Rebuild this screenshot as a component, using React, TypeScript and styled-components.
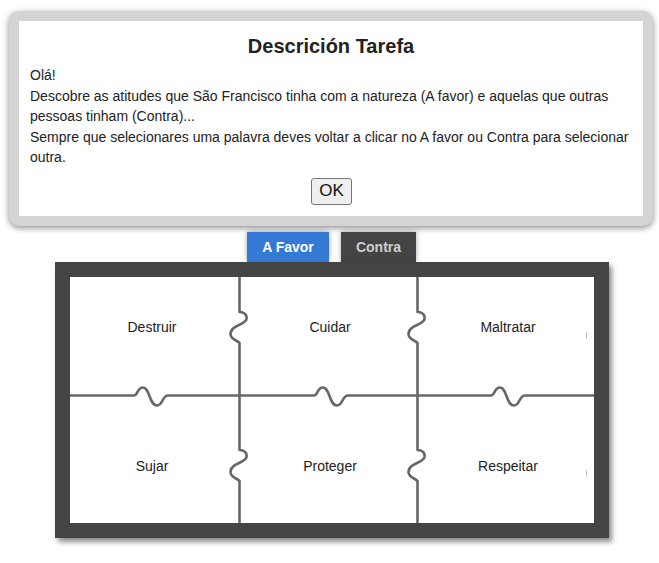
import React from "react";
import styled, { createGlobalStyle } from "styled-components";

const Global = createGlobalStyle`
  html, body { margin: 0; padding: 0; background: #fff; }
  body { font-family: "Liberation Sans", Arial, Helvetica, sans-serif; color: #222; }
`;

const Page = styled.div`
  width: 659px;
  height: 563px;
  padding-top: 11px;
  box-sizing: border-box;
  display: flex;
  flex-direction: column;
  align-items: flex-start;
`;

const Modal = styled.div`
  margin-left: 9px;
  width: 644px;
  box-sizing: border-box;
  border: 10px solid #d4d4d4;
  border-radius: 10px;
  background: #fff;
  box-shadow: 0 2px 6px rgba(0, 0, 0, 0.45);
  padding: 13px 11px 11px 11px;
  display: flex;
  flex-direction: column;
`;

const Title = styled.h2`
  margin: 0 0 7px 0;
  font-size: 20px;
  line-height: 24px;
  font-weight: bold;
  text-align: center;
  color: #222;
`;

const Body = styled.p`
  margin: 0;
  font-size: 14px;
  line-height: 20.5px;
  color: #222;
`;

const OkRow = styled.div`
  display: flex;
  justify-content: center;
  margin-top: 10px;
`;

const OkButton = styled.button`
  width: 41px;
  height: 27px;
  padding: 0;
  font-family: "Liberation Sans", Arial, sans-serif;
  font-size: 17px;
  color: #111;
  background: #efefef;
  border: 1px solid #767676;
  border-radius: 3px;
  margin-left: 1px;
`;

const Stage = styled.div`
  margin-top: 6px;
  padding-left: 55px;
  display: flex;
  flex-direction: column;
  align-items: flex-start;
`;

const TabBar = styled.div`
  display: flex;
  gap: 12px;
  margin-left: 192px;
`;

const Tab = styled.div<{ $active?: boolean }>`
  height: 30px;
  width: ${(p) => (p.$active ? "82px" : "75px")};
  display: flex;
  align-items: center;
  justify-content: center;
  font-size: 14px;
  font-weight: bold;
  background: ${(p) => (p.$active ? "#3479d3" : "#444")};
  color: ${(p) => (p.$active ? "#fff" : "#cfcfcf")};
  box-shadow: 0 0 5px rgba(0, 0, 0, 0.35);
`;

const Board = styled.div`
  width: 554px;
  box-sizing: border-box;
  border: 15px solid #444;
  background: #fff;
  box-shadow: 3px 4px 5px rgba(0, 0, 0, 0.45);
  position: relative;
  z-index: 1;
`;

const Grid = styled.div`
  display: grid;
  grid-template-columns: 170px 178px 176px;
  grid-template-rows: 119px 127px;
`;

const Piece = styled.div<{ $top: number; $dx: number }>`
  display: flex;
  justify-content: center;
  padding-top: ${(p) => p.$top}px;
  padding-left: ${(p) => (p.$dx > 0 ? p.$dx * 2 : 0)}px;
  padding-right: ${(p) => (p.$dx < 0 ? -p.$dx * 2 : 0)}px;
  box-sizing: border-box;
  font-size: 14px;
  line-height: 16px;
  color: #222;
`;

const Lines = styled.svg`
  position: absolute;
  left: 0;
  top: 0;
  pointer-events: none;
`;

const vTab = (x: number, y0: number) =>
  `L ${x} ${y0} C ${x + 2} ${y0} ${x + 8} ${y0 + 1} ${x + 7} ${y0 + 7} C ${x + 6} ${y0 + 13} ${x - 9} ${y0 + 13} ${x - 9} ${y0 + 22} C ${x - 9} ${y0 + 28} ${x - 2} ${y0 + 28} ${x} ${y0 + 31}`;

const hTab = (x0: number, y: number) =>
  `L ${x0} ${y} C ${x0 + 4} ${y} ${x0 + 3} ${y - 8} ${x0 + 9} ${y - 8} C ${x0 + 16} ${y - 8} ${x0 + 15} ${y + 10} ${x0 + 23} ${y + 10} C ${x0 + 29} ${y + 10} ${x0 + 28} ${y} ${x0 + 34} ${y}`;

const words = [
  { t: "Destruir", top: 42, dx: -3 },
  { t: "Cuidar", top: 42, dx: 1 },
  { t: "Maltratar", top: 42, dx: 2 },
  { t: "Sujar", top: 62, dx: -3 },
  { t: "Proteger", top: 62, dx: 1 },
  { t: "Respeitar", top: 62, dx: 2 },
];

export default function App() {
  const hy = 118.5;
  const hPath = `M 0 ${hy} ${hTab(64, hy)} ${hTab(244, hy)} ${hTab(421, hy)} L 524 ${hy}`;
  const v1 = `M 169.5 0 ${vTab(169.5, 35)} ${vTab(169.5, 173)} L 169.5 246`;
  const v2 = `M 347.5 0 ${vTab(347.5, 35)} ${vTab(347.5, 173)} L 347.5 246`;
  return (
    <>
      <Global />
      <Page>
        <Modal>
          <Title>Descrición Tarefa</Title>
          <Body>
            Olá!
            <br />
            Descobre as atitudes que São Francisco tinha com a natureza (A favor) e aquelas que outras
            pessoas tinham (Contra)...
            <br />
            Sempre que selecionares uma palavra deves voltar a clicar no A favor ou Contra para selecionar
            outra.
          </Body>
          <OkRow>
            <OkButton>OK</OkButton>
          </OkRow>
        </Modal>
        <Stage>
          <TabBar>
            <Tab $active>A Favor</Tab>
            <Tab>Contra</Tab>
          </TabBar>
          <Board>
            <Grid>
              {words.map((w) => (
                <Piece key={w.t} $top={w.top} $dx={w.dx}>
                  {w.t}
                </Piece>
              ))}
            </Grid>
            <Lines width="524" height="246" viewBox="0 0 524 246">
              <g fill="none" stroke="#676767" strokeWidth="2.6" strokeLinejoin="round">
                <path d={hPath} />
                <path d={v1} />
                <path d={v2} />
              </g>
              <g stroke="#c4c4c4" strokeWidth="1">
                <line x1="516.5" y1="55" x2="516.5" y2="62" />
                <line x1="516.5" y1="193" x2="516.5" y2="200" />
              </g>
            </Lines>
          </Board>
        </Stage>
      </Page>
    </>
  );
}
